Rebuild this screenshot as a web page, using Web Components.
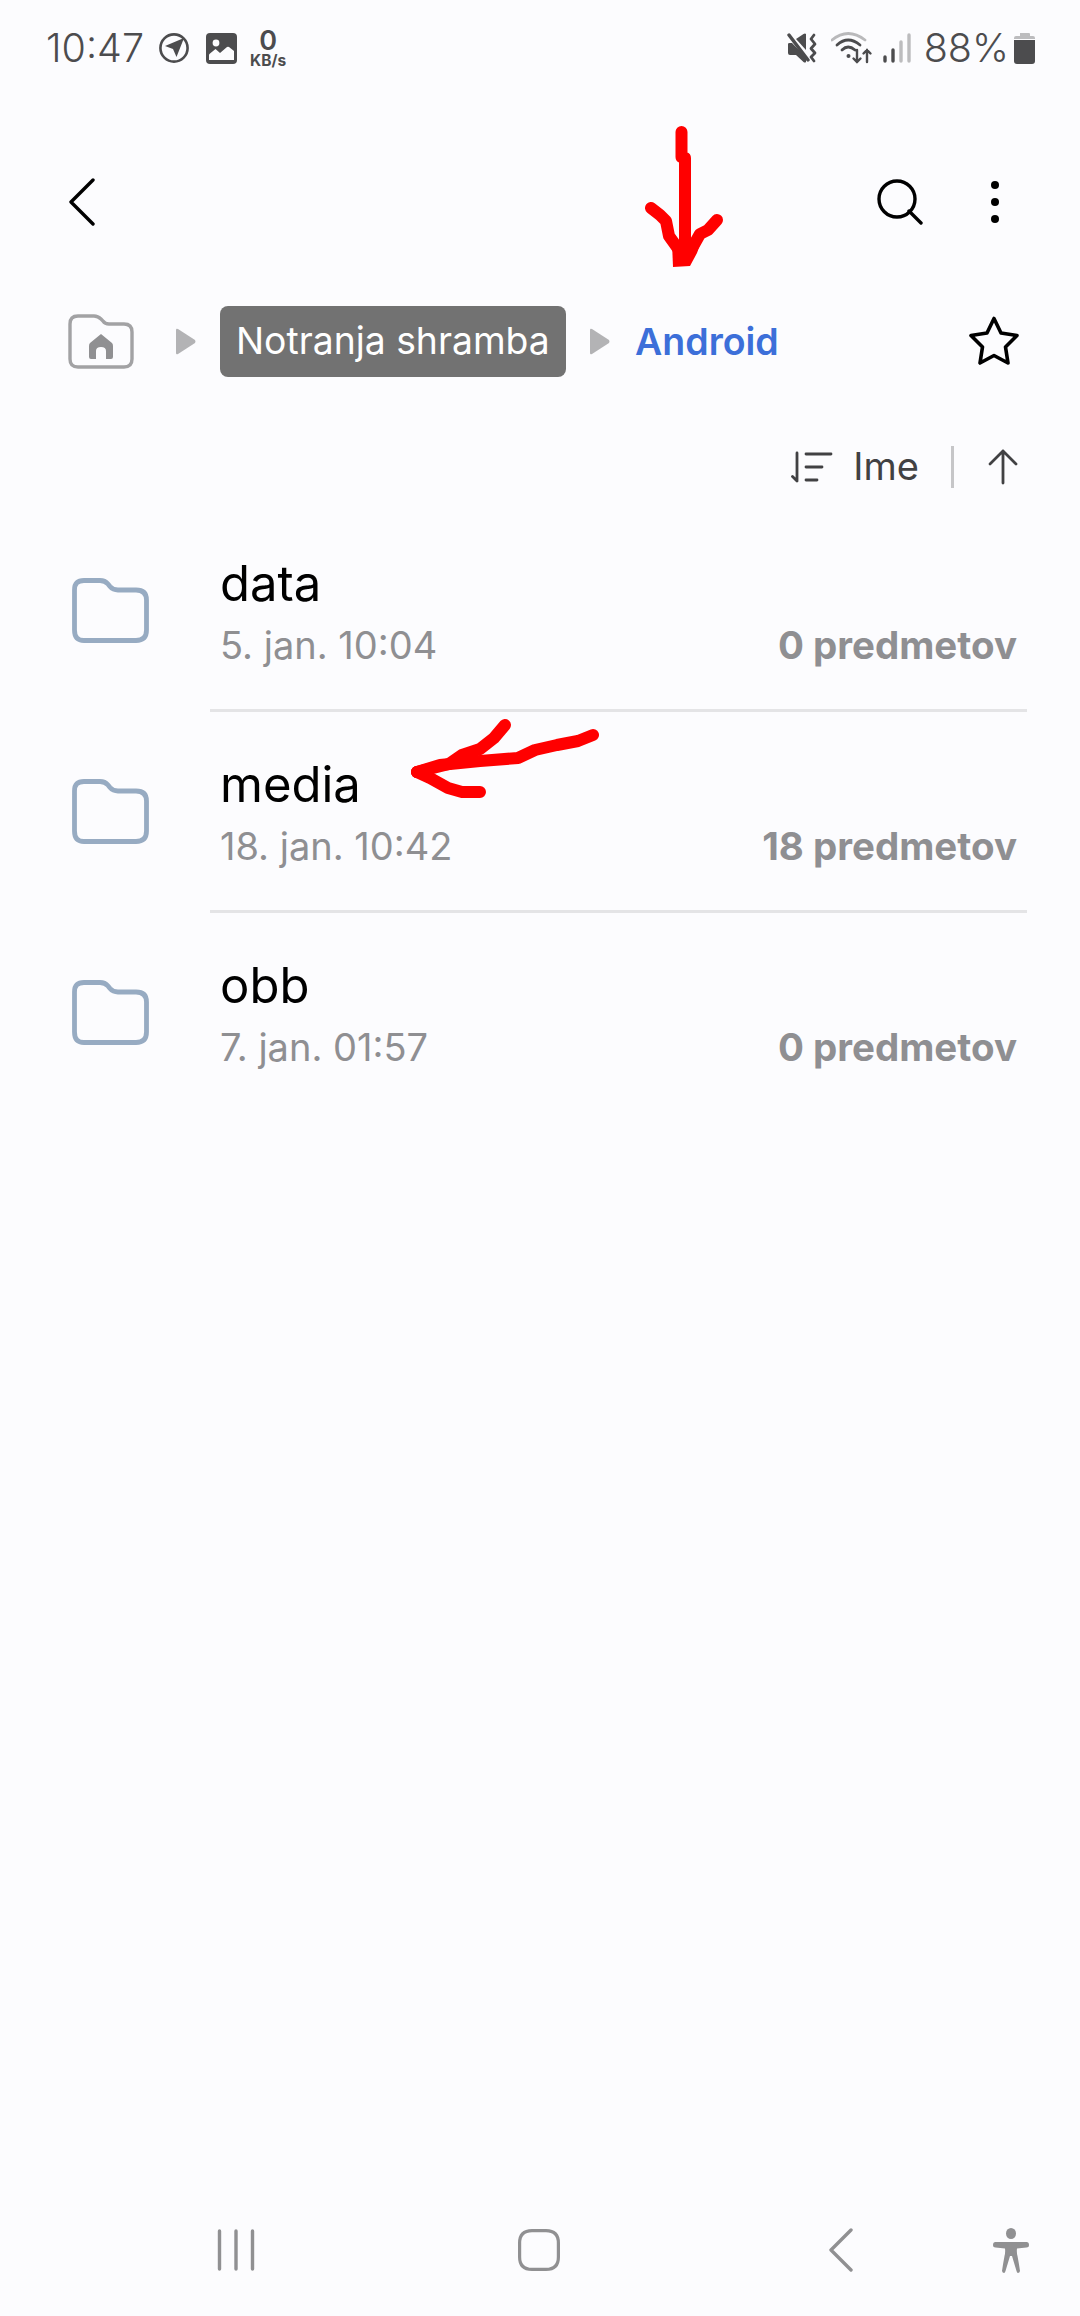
<!DOCTYPE html>
<html lang="sl">
<head>
<meta charset="utf-8">
<title>Moje datoteke</title>
<style>
    html, body { margin: 0; padding: 0; background: #fcfcfe; }
    body {
        position: relative;
        display: flex;
        flex-direction: column;
        width: 1080px;
        height: 2316px;
        overflow: hidden;
        font-family: Inter, Roboto, "Liberation Sans", sans-serif;
    }
</style>
</head>
<body>
<status-bar></status-bar>
<app-bar></app-bar>
<path-bar>
    <span slot="root">Notranja shramba</span>
    <span slot="current">Android</span>
</path-bar>
<sort-bar>Ime</sort-bar>
<folder-row><span>data</span><span slot="date">5. jan. 10:04</span><span slot="count">0 predmetov</span></folder-row>
<folder-row><span>media</span><span slot="date">18. jan. 10:42</span><span slot="count">18 predmetov</span></folder-row>
<folder-row last><span>obb</span><span slot="date">7. jan. 01:57</span><span slot="count">0 predmetov</span></folder-row>
<nav-bar></nav-bar>
<red-marks></red-marks>

<script>
class statusBar extends HTMLElement {
    constructor(){
        super()
        this.attachShadow({ mode: 'open' })
        this.shadowRoot.innerHTML = `
        <style>
            :host { display: flex; align-items: center; height: 96px; padding: 0 45px 0 46px; color: #4c4c4e; flex: none; }
            .time, .pct { font-size: 39.5px; font-weight: 300; line-height: 1; white-space: nowrap; padding-top: 2px; }
            svg { display: block; flex: none; }
            .speed { width: 38px; margin-left: 12px; text-align: center; line-height: 1; }
            .speed b { display: block; font-size: 27px; font-weight: 600; line-height: 24px; height: 24px; }
            .speed i { display: block; font-size: 15.5px; font-weight: 700; line-height: 15px; font-style: normal; white-space: nowrap; margin: 0 -2px; }
            .grow { flex: 1; }
        </style>
        <span class="time">10:47</span>
        <svg style="margin-left:15px" width="30" height="30" viewBox="0 0 30 30"><circle cx="15" cy="15" r="13.6" fill="none" stroke="#4c4c4e" stroke-width="2.6"/><path d="M25 5 L17.5 24 L14 16 L6 13 Z" fill="#4c4c4e"/></svg>
        <svg style="margin-left:17px" width="31" height="31" viewBox="0 0 31 31"><rect width="31" height="31" rx="4" fill="#4c4c4e"/><circle cx="10" cy="10" r="3.4" fill="#fcfcfe"/><path d="M3 27 V22 Q3 21 4 20.5 L9.500 16 L14 20 L21 14 Q22 13.500 23 14 L28 18 V27 Z" fill="#fcfcfe"/></svg>
        <span class="speed"><b>0</b><i>KB/s</i></span>
        <span class="grow"></span>
        <svg width="30" height="30" viewBox="0 0 30 30" fill="#4c4c4e"><path d="M1 11 Q1 10 2.500 10 H5 L19 24 V29 Q18 30 16.500 29 L9 22 H3 Q1 22 1 20 Z"/><path d="M9 6 L16.500 1 Q18 0 19 1 V17 Z"/><path d="M2 2 L21 27" stroke="#4c4c4e" stroke-width="3.4" stroke-linecap="round"/><path d="M27 2 L24 6 L28 11 L24 15.500 L28 20 L24 24 L27 28" fill="none" stroke="#4c4c4e" stroke-width="2.800" stroke-linecap="round" stroke-linejoin="round"/></svg>
        <svg style="margin-left:14px" width="42" height="32" viewBox="0 0 42 32" fill="none" stroke-linecap="round"><path d="M1 8 Q17 -5 34 8" stroke="#b9b9bb" stroke-width="2.800"/><path d="M6 13 Q17 3 29 13" stroke="#4c4c4e" stroke-width="2.800"/><path d="M11 18 Q17 12 24 18" stroke="#4c4c4e" stroke-width="2.800"/><circle cx="17.500" cy="24" r="2" fill="#4c4c4e"/><path d="M26 18 V30 M22.500 26.500 L26 30 L29.500 26.500 M36 30 V18 M32.500 21.500 L36 18 L39.500 21.500" stroke="#4c4c4e" stroke-width="2.400"/></svg>
        <svg style="margin-left:10px" width="28" height="30" viewBox="0 0 28 30" fill="none" stroke-width="3.400" stroke-linecap="round"><path d="M2 28 V24" stroke="#4c4c4e"/><path d="M10 28 V17" stroke="#4c4c4e"/><path d="M18 28 V9" stroke="#bcbcbe"/><path d="M26 28 V2" stroke="#bcbcbe"/></svg>
        <span class="pct" style="margin-left:13px">88%</span>
        <svg style="margin-left:5px" width="21" height="31" viewBox="0 0 21 31"><path d="M6 0 H15 Q16 0 16 1 V3 H6 V1 Q6 0 6 0 Z M2 3 H19 Q21 3 21 5 V6 H0 V5 Q0 3 2 3 Z" fill="#bcbcbe"/><path d="M0 7 H21 V28 Q21 31 18 31 H3 Q0 31 0 28 Z" fill="#4c4c4e"/></svg>
        `
    }
}

class appBar extends HTMLElement {
    constructor(){
        super()
        this.attachShadow({ mode: 'open' })
        this.shadowRoot.innerHTML = `
        <style>
            :host { display: flex; align-items: center; height: 140px; margin-top: 36px; padding: 0 81px 0 69px; flex: none; }
            svg { display: block; flex: none; }
            .grow { flex: 1; }
        </style>
        <svg width="26" height="48" viewBox="0 0 26 48" fill="none" stroke="#000" stroke-width="3.400" stroke-linecap="round" stroke-linejoin="round"><path d="M24 2 L2 24 L24 46"/></svg>
        <span class="grow"></span>
        <svg width="46" height="46" viewBox="0 0 46 46" fill="none" stroke="#000" stroke-width="3.400" stroke-linecap="round"><circle cx="20" cy="20" r="18"/><path d="M32 32 L44 44"/></svg>
        <svg style="margin-left:68px" width="8" height="42" viewBox="0 0 8 42" fill="#000"><circle cx="4" cy="4" r="4"/><circle cx="4" cy="21" r="4"/><circle cx="4" cy="38" r="4"/></svg>
        `
    }
}

class pathBar extends HTMLElement {
    constructor(){
        super()
        this.attachShadow({ mode: 'open' })
        const tri = (m) => `<svg style="margin:${m}" width="20" height="27" viewBox="0 0 20 27"><path d="M2 1 L19 12 Q20 13.500 19 15 L2 26 Q0 27 0 25 V2 Q0 0 2 1 Z" fill="#b3b3b5"/></svg>`
        this.shadowRoot.innerHTML = `
        <style>
            :host { display: flex; align-items: center; height: 138px; padding: 0 60px 0 68px; flex: none; font-size: 37.3px; }
            svg { display: block; flex: none; }
            .pill { display: flex; align-items: center; width: 346px; height: 71px; padding: 0 0 2px 16px; box-sizing: border-box; border-radius: 8px; background: #727272; color: #fff; white-space: nowrap; }
            .cur { color: #3c6fd9; font-size: 37.5px; font-weight: 600; white-space: nowrap; margin-left: 25px; }
            .grow { flex: 1; }
        </style>
        <svg width="66" height="55" viewBox="0 0 66 55" fill="none"><path d="M2 10 Q2 2 10 2 H26 Q30 2 33 5 L35 7 Q37 10 41 10 H56 Q64 10 64 18 V45 Q64 53 56 53 H10 Q2 53 2 45 Z" stroke="#a2a2a4" stroke-width="3.400"/><path d="M33 20 L44 29 Q45 30 45 32 V43 Q45 45 43 45 H38 V37 Q38 33 33 33 Q28 33 28 37 V45 H23 Q21 45 21 43 V32 Q21 30 22 29 Z" fill="#909092"/></svg>
        ${tri('0 24px 0 42px')}
        <span class="pill"><slot name="root"></slot></span>
        ${tri('0 0 0 24px')}
        <span class="cur"><slot name="current"></slot></span>
        <span class="grow"></span>
        <svg width="52" height="50" viewBox="0 0 52 50" fill="none" stroke="#000" stroke-width="3.600" stroke-linejoin="round"><path d="M26 2.500 L33 17 L49 19.500 L37.500 31 L40 47 L26 39.500 L12 47 L14.500 31 L3 19.500 L19 17 Z"/></svg>
        `
    }
}

class sortBar extends HTMLElement {
    constructor(){
        super()
        this.attachShadow({ mode: 'open' })
        this.shadowRoot.innerHTML = `
        <style>
            :host { display: flex; align-items: center; justify-content: flex-end; height: 88px; padding: 13px 62px 0 0; flex: none; color: #414143; font-size: 38px; }
            svg { display: block; flex: none; }
            .label { margin: 0 0 2px 20px; }
            .sep { width: 3px; height: 42px; margin: 0 34px 0 32px; background: #c6c6c8; }
        </style>
        <svg width="42" height="32" viewBox="0 0 42 32" fill="none" stroke="#414143" stroke-width="2.800" stroke-linecap="round"><path d="M6 2 V30 M1.500 25.500 L6 30"/><path d="M15 3 H40 M15 16 H31 M15 29 H26"/></svg>
        <span class="label"><slot></slot></span>
        <span class="sep"></span>
        <svg width="30" height="36" viewBox="0 0 30 36" fill="none" stroke="#414143" stroke-width="2.800" stroke-linecap="round" stroke-linejoin="round"><path d="M15 34 V2 M2 15 L15 2 L28 15"/></svg>
        `
    }
}

class folderRow extends HTMLElement {
    constructor(){
        super()
        this.attachShadow({ mode: 'open' })
        this.shadowRoot.innerHTML = `
        <style>
            :host { display: block; position: relative; height: 201px; flex: none; }
            .row { display: flex; height: 198px; padding: 0 63px 0 72px; }
            svg { display: block; flex: none; margin: 67px 0 0; }
            .text { flex: 1; display: flex; flex-direction: column; margin-left: 71px; padding-top: 46px; min-width: 0; }
            .name { font-size: 49px; line-height: 54px; color: #000; }
            .meta { display: flex; justify-content: space-between; align-items: baseline; margin-top: 12px; font-size: 38px; line-height: 44px; color: #8f8f92; }
            .count { font-size: 38.500px; font-weight: 700; }
            .line { height: 3px; margin: 0 53px 0 210px; background: #e4e4e6; }
            :host([last]) .line { background: transparent; }
        </style>
        <div class="row">
            <svg width="77" height="65" viewBox="0 0 77 65" fill="none"><path d="M2.500 12 Q2.500 2.500 12 2.500 H28 Q33 2.500 36 6 L38 8.500 Q41 12 46 12 H64 Q74.500 12 74.500 22 V52 Q74.500 62.500 64 62.500 H12 Q2.500 62.500 2.500 52 Z" stroke="#97abc2" stroke-width="4.800"/></svg>
            <div class="text">
                <div class="name"><slot></slot></div>
                <div class="meta"><span><slot name="date"></slot></span><span class="count"><slot name="count"></slot></span></div>
            </div>
        </div>
        <div class="line"></div>
        `
    }
}

class navBar extends HTMLElement {
    constructor(){
        super()
        this.attachShadow({ mode: 'open' })
        this.shadowRoot.innerHTML = `
        <style>
            :host { display: flex; align-items: center; height: 116px; margin-top: auto; padding: 0 0 16px 85px; box-sizing: border-box; flex: none; }
            .btn { width: 302.500px; display: flex; justify-content: center; flex: none; }
            svg { display: block; }
        </style>
        <div class="btn"><svg width="38" height="42" viewBox="0 0 38 42" fill="none" stroke="#909092" stroke-width="3.400" stroke-linecap="round"><path d="M2.500 2 V40 M19 2 V40 M35.500 2 V40"/></svg></div>
        <div class="btn"><svg width="42" height="42" viewBox="0 0 42 42" fill="none" stroke="#909092" stroke-width="3.200"><path d="M14 1.600 H28 Q40.400 1.600 40.400 14 V28 Q40.400 40.400 28 40.400 H14 Q1.600 40.400 1.600 28 V14 Q1.600 1.600 14 1.600 Z"/></svg></div>
        <div class="btn"><svg width="24" height="44" viewBox="0 0 24 44" fill="none" stroke="#909092" stroke-width="3.400" stroke-linecap="round" stroke-linejoin="round"><path d="M22 2 L2 22 L22 42"/></svg></div>
        <svg width="36" height="45" viewBox="0 0 36 45" fill="#909092"><ellipse cx="18" cy="5.500" rx="5" ry="5.500"/><path d="M2.500 14 H33.500 Q36 14 36 17 Q36 19.500 33.500 19.500 L24 20.500 Q23.500 24 24.500 28 Q26 36 27 43 Q26.500 45 25 45 Q24 45 23.500 43 L19 28 H17 L12.500 43 Q12 45 11 45 Q9.500 45 9 43 Q10 36 11.500 28 Q12.500 24 12 20.500 L2.500 19.500 Q0 19.500 0 17 Q0 14 2.500 14 Z"/></svg>
        `
    }
}

// the red marker scribbles drawn over the screenshot
class redMarks extends HTMLElement {
    constructor(){
        super()
        this.attachShadow({ mode: 'open' })
        this.shadowRoot.innerHTML = `
        <style>
            :host { position: absolute; left: 0; top: 0; width: 1080px; height: 2316px; pointer-events: none; }
            svg { display: block; }
        </style>
        <svg width="1080" height="2316" viewBox="0 0 1080 2316" fill="none" stroke="#ff0000" stroke-linecap="round" stroke-linejoin="round">
            <path stroke-width="12" d="M681.500 132 L681.500 157 L685 158 L685 250"/>
            <path stroke-width="12" d="M651 208 L660 215 L666 221 L669 236 L679 250"/>
            <path stroke-width="12" d="M717 220 L708 230 L700 234 L691 250"/>
            <path fill="#ff0000" stroke="none" d="M672 243 L702 238 L697 253 L690 266 L673 267 Z"/>
            <path stroke-width="12" d="M505 725 L494 738 L480 749 L462 755 L449 764 L417 772"/>
            <path stroke-width="12" d="M593 735 L578 741 L557 745 L535 750 L518 758 L480 761 L440 765 L417 772"/>
            <path stroke-width="12" d="M417 772 L430 778 L448 788 L462 792 L480 792"/>
        </svg>
        `
    }
}

customElements.define('status-bar', statusBar)
customElements.define('app-bar', appBar)
customElements.define('path-bar', pathBar)
customElements.define('sort-bar', sortBar)
customElements.define('folder-row', folderRow)
customElements.define('nav-bar', navBar)
customElements.define('red-marks', redMarks)
</script>
</body>
</html>
